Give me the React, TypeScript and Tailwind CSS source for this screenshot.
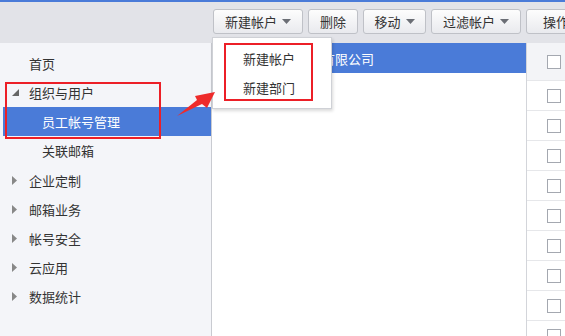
import React from 'react';

const font = { fontFamily: '"Noto Sans CJK SC", "Noto Sans", sans-serif' };

function Caret() {
  return (
    <svg width="9" height="5" viewBox="0 0 9 5" className="ml-[5px]">
      <path d="M0 0 L9 0 L4.5 5 Z" fill="#6b6e75" />
    </svg>
  );
}

function ToolButton({ label, width, caret }: { label: string; width: string; caret?: boolean }) {
  return (
    <div
      className={`${width} h-[25px] shrink-0 flex items-center justify-center rounded-[3px] border border-[#bfc1c7] bg-gradient-to-b from-[#fdfdfd] to-[#e9eaee] text-[13px] text-[#333]`}
    >
      {label}
      {caret && <Caret />}
    </div>
  );
}

const groups = ['企业定制', '邮箱业务', '帐号安全', '云应用', '数据统计'];

export default function App() {
  return (
    <div className="relative w-[565px] h-[336px] overflow-hidden bg-white" style={font}>
      <div className="h-[2px] bg-[#4a7bd8]" />

      {/* Toolbar */}
      <div className="h-[41px] bg-[#e2e3e8] flex items-center gap-[5px] pl-[213px] pb-[2px]">
        <ToolButton label="新建帐户" width="w-[90px]" caret />
        <ToolButton label="删除" width="w-[50px]" />
        <ToolButton label="移动" width="w-[63px]" caret />
        <ToolButton label="过滤帐户" width="w-[90px]" caret />
        <ToolButton label="操作" width="w-[60px]" />
      </div>

      <div className="flex h-[293px]">
        {/* Sidebar */}
        <div className="w-[211px] shrink-0 bg-[#f4f5f9] pt-[6px] text-[13px] text-[#333]">
          <div className="h-[29px] flex items-center pl-[29px]">首页</div>
          <div className="h-[29px] flex items-center pl-[12px]">
            <svg width="7" height="7" viewBox="0 0 7 7" className="mr-[10px]">
              <path d="M7 0 L7 7 L0 7 Z" fill="#666" />
            </svg>
            组织与用户
          </div>
          <div className="h-[29px] ml-[3px] flex items-center pl-[39px] bg-[#4a7bd8] text-white">员工帐号管理</div>
          <div className="h-[30px] flex items-center pl-[42px]">关联邮箱</div>
          {groups.map((g) => (
            <div key={g} className="h-[29px] flex items-center pl-[12px]">
              <svg width="5" height="9" viewBox="0 0 5 9" className="mr-[12px]">
                <path d="M0 0 L5 4.5 L0 9 Z" fill="#888" />
              </svg>
              {g}
            </div>
          ))}
        </div>

        {/* Middle panel */}
        <div className="w-[315px] shrink-0 border-l border-[#c9cbd1] bg-white">
          <div className="h-[30px] bg-[#4a7bd8] text-white text-[13px] flex items-center pl-[32px] pt-[1px]">
            某某网络科技有限公司
          </div>
        </div>

        {/* Right column */}
        <div className="flex-1 border-l border-[#d3d5da]">
          <div className="h-[38px] bg-[#f3f4f7] flex items-center pl-[20px] border-b border-[#e6e7ea]">
            <div className="w-[14px] h-[14px] border border-[#a4a8b0] bg-white" />
          </div>
          {Array.from({ length: 9 }).map((_, i) => (
            <div key={i} className="h-[30px] flex items-center pl-[20px] border-b border-[#e6e7ea]">
              <div className="w-[14px] h-[14px] border border-[#a4a8b0] bg-white" />
            </div>
          ))}
        </div>
      </div>

      {/* Dropdown menu */}
      <div className="absolute left-[212px] top-[37px] w-[120px] h-[72px] bg-white border border-[#cfd1d6] shadow-[1px_2px_3px_rgba(0,0,0,0.15)] text-[13px] text-[#333]">
        <div className="absolute left-[11px] top-[5px] w-[89px] h-[58px] border-2 border-[#ec1f27]" />
        <div className="h-[29px] mt-[6px] flex items-center justify-center pr-[6px]">新建帐户</div>
        <div className="h-[29px] flex items-center justify-center pr-[6px]">新建部门</div>
      </div>

      {/* Highlight around sidebar group */}
      <div className="absolute left-[5px] top-[82px] w-[156px] h-[57px] border-2 border-[#ec1f27]" />

      {/* Arrow */}
      <svg className="absolute left-[170px] top-[80px]" width="50" height="40" viewBox="0 0 50 40">
        <path d="M7 36 L27 20 L25 16 L45 12 L37 28 L32 24 Z" fill="#ee2b2b" />
      </svg>
    </div>
  );
}
